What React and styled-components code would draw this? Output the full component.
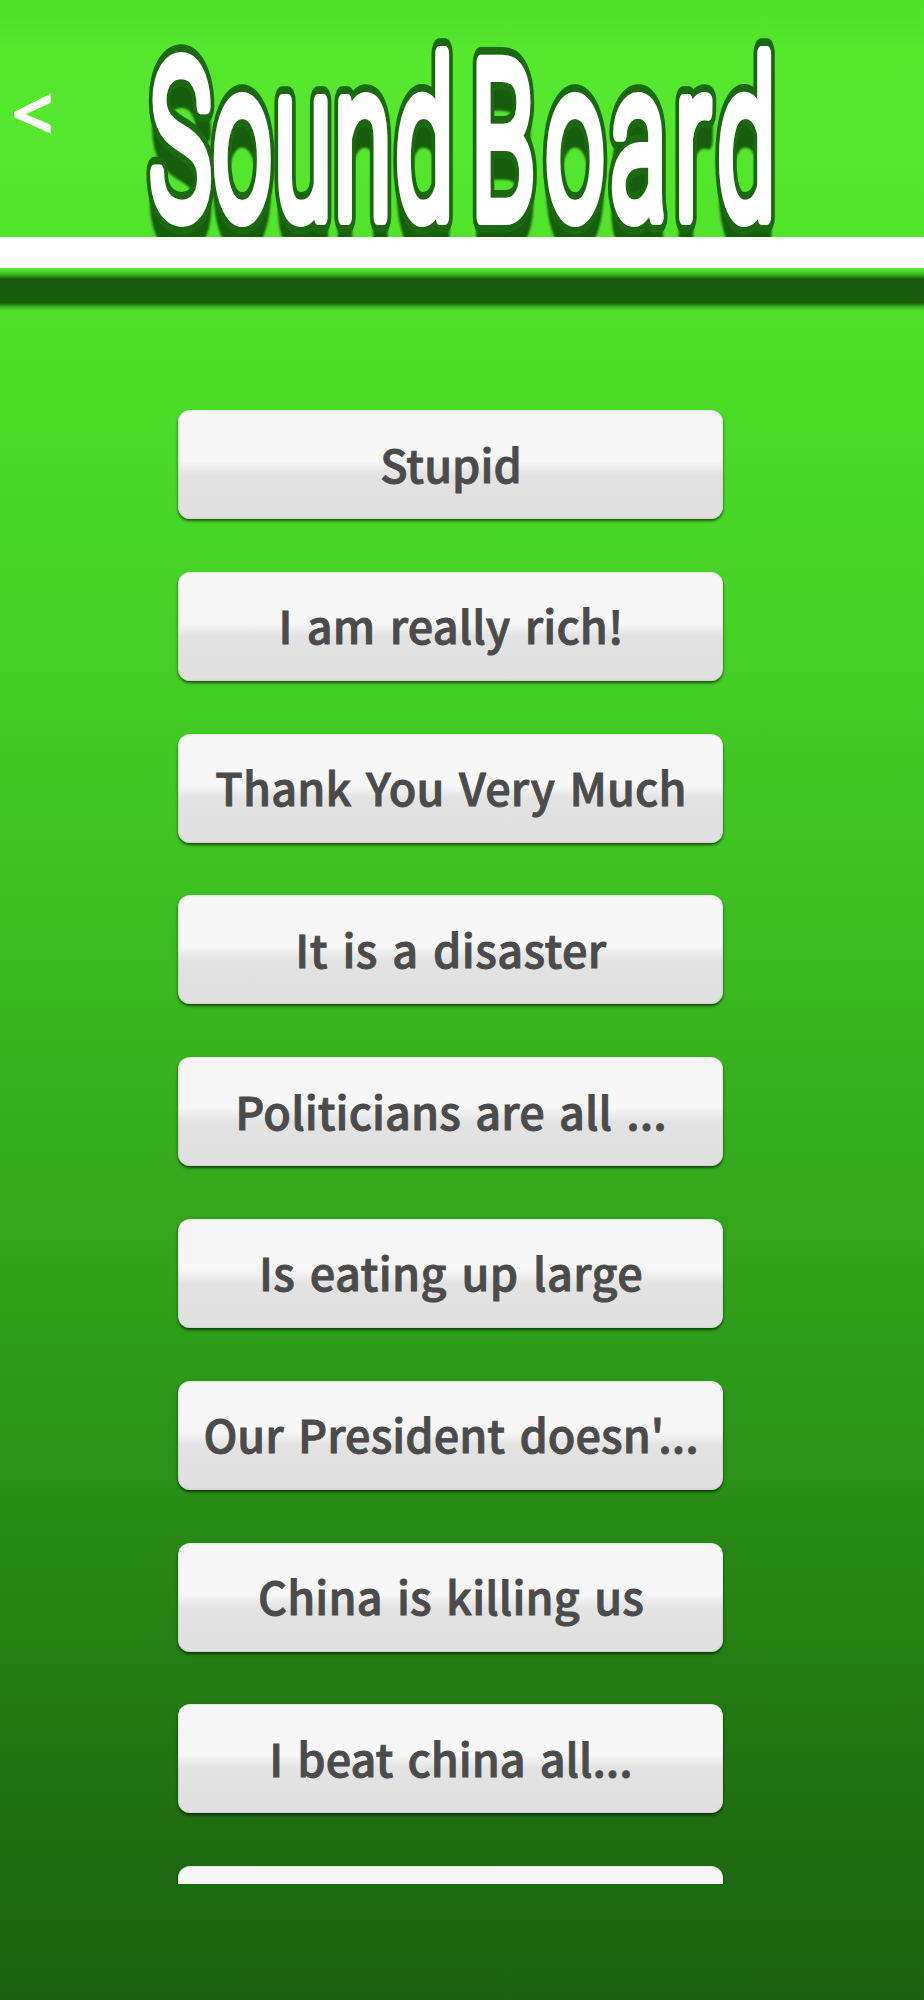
import React from "react";
import styled, { createGlobalStyle } from "styled-components";

const GlobalStyle = createGlobalStyle`
  *, *::before, *::after { box-sizing: border-box; }
  body { margin: 0; background: #1a600e; }
`;

const Screen = styled.main`
  display: flex;
  flex-direction: column;
  width: 924px;
  height: 2000px;
  overflow: hidden;
  background: linear-gradient(
    to bottom,
    #50e12b 0,
    #4fdf29 300px,
    #4bdc28 400px,
    #45d025 640px,
    #3fc422 840px,
    #38b41e 1040px,
    #2e9d19 1340px,
    #237c12 1680px,
    #1e6c10 1850px,
    #1a610f 2000px
  );
`;

const Header = styled.header`
  display: flex;
  height: 237px;
  background: linear-gradient(
    to bottom,
    #4fe02a 0,
    #51e42b 34px,
    #55e82d 50px,
    #54e72d 150px,
    #52e32b 237px
  );
`;

const BackButton = styled.button`
  flex: none;
  width: 140px;
  height: 224px;
  padding: 0 0 0 11px;
  border: 0;
  background: none;
  color: #fff;
  font: 700 75px/224px "Noto Sans", sans-serif;
  text-align: left;
`;

const TitleArt = styled.svg`
  display: block;
  flex: none;
  width: 700px;
  height: 237px;
  overflow: hidden;

  text {
    font-family: Roboto, "Liberation Sans", sans-serif;
    font-weight: 300;
    font-size: 100px;
    stroke-linejoin: round;
    stroke-linecap: round;
  }
`;

const Stripe = styled.div`
  flex: none;
  height: 31px;
  background: #fff;
`;

const StripeShadow = styled.div`
  flex: none;
  height: 43px;
  background: linear-gradient(
    to bottom,
    #5ee63a 0,
    #4fdf29 3px,
    #3fbd22 6px,
    #195d0c 11px,
    #195d0c 35px,
    #3fb822 39px,
    #4fdf29 43px
  );
`;

const PhraseList = styled.div`
  display: flex;
  flex-direction: column;
  gap: 52.8px;
  width: 545px;
  height: 1474px;
  margin: 99px 0 0 178px;
  clip-path: inset(0 -8px 0 -8px);
`;

const PhraseButton = styled.button`
  display: flex;
  flex: none;
  align-items: center;
  justify-content: center;
  width: 545px;
  height: 109px;
  padding: 0 0 2px 1px;
  border: 0;
  border-radius: 12px;
  background: linear-gradient(to bottom, #f7f7f7 0, #f7f7f7 47%, #e3e3e3 59%, #e0e0e0 100%);
  box-shadow: 0 2px 3px rgba(0, 0, 0, 0.6), inset 0 0 2px rgba(120, 140, 120, 0.5);
  color: #4b4b4b;
`;

const Label = styled.span`
  font: 500 45px/60px "Noto Sans CJK SC", "Noto Sans", sans-serif;
  letter-spacing: ${(p) => p.$tracking}px;
  word-spacing: 4px;
  white-space: nowrap;
  -webkit-text-stroke: 0.9px #4b4b4b;
`;

const phrases = [
  { text: "Stupid", tracking: 0 },
  { text: "I am really rich!", tracking: 0.15 },
  { text: "Thank You Very Much", tracking: 0.2 },
  { text: "It is a disaster", tracking: 0.4 },
  { text: "Politicians are all ...", tracking: 0.1 },
  { text: "Is eating up large", tracking: 0.4 },
  { text: "Our President doesn'...", tracking: 0.05 },
  { text: "China is killing us", tracking: 0.15 },
  { text: "I beat china all...", tracking: 0 },
  { text: "", tracking: 0 },
];

// Horizontal start of each letter in the wordmark, in unscaled units.
const letterX = "6.2 66.9 125.5 182.8 241.3 296 313.8 385.5 447.3 509 549.5";

function Title() {
  return (
    <TitleArt viewBox="140 0 700 237" role="img" aria-label="Sound Board">
      <defs>
        <filter id="soft" x="-5%" y="-5%" width="110%" height="110%">
          <feGaussianBlur stdDeviation="0.8" />
        </filter>
        <text id="wordmark" x={letterX} y="0">
          Sound Board
        </text>
      </defs>
      <g filter="url(#soft)">
        <use
          href="#wordmark"
          transform="translate(143 245) scale(1.045 2.165)"
          fill="#195d0c"
          stroke="#195d0c"
          strokeWidth="8"
        />
      </g>
      <use
        href="#wordmark"
        transform="translate(143 217) scale(1.045 2.165)"
        fill="#1c6810"
        stroke="#1c6810"
        strokeWidth="14.6"
      />
      <use
        href="#wordmark"
        transform="translate(143 217) scale(1.045 2.165)"
        fill="#fff"
        stroke="#fff"
        strokeWidth="7.4"
      />
    </TitleArt>
  );
}

export default function App() {
  return (
    <>
      <GlobalStyle />
      <Screen>
        <Header>
          <BackButton>&lt;</BackButton>
          <Title />
        </Header>
        <Stripe />
        <StripeShadow />
        <PhraseList>
          {phrases.map((p, i) => (
            <PhraseButton key={i}>
              <Label $tracking={p.tracking}>{p.text}</Label>
            </PhraseButton>
          ))}
        </PhraseList>
      </Screen>
    </>
  );
}
